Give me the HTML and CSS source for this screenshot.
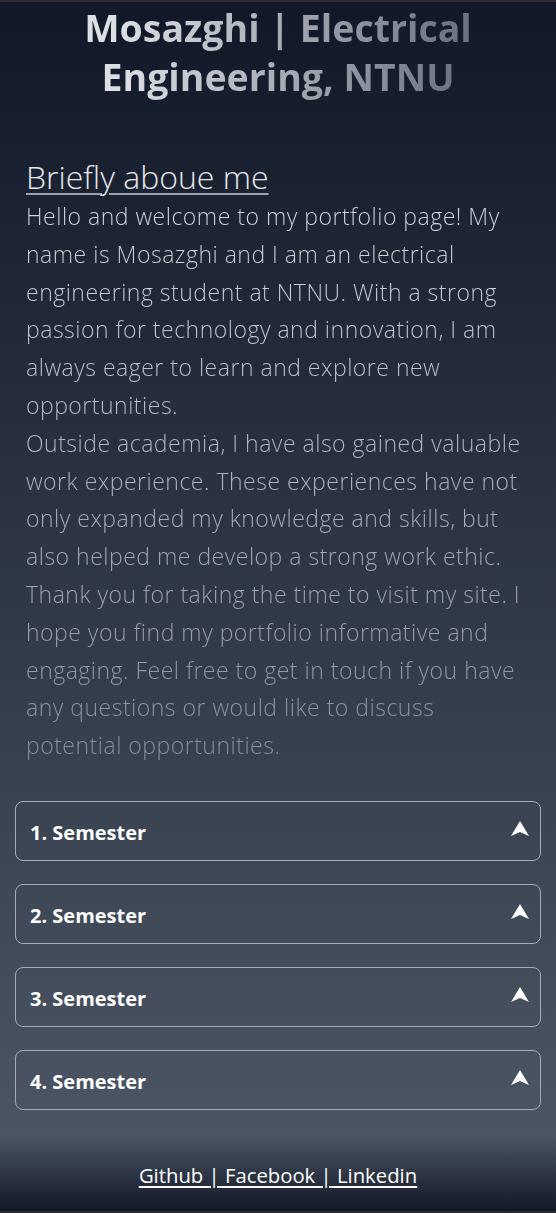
FILE: index.html
```html
<!DOCTYPE html>
<html lang="en">
<head>
<meta charset="utf-8">
<title>Mosazghi | Electrical Engineering, NTNU</title>
<link rel="stylesheet" href="styles.css">
</head>
<body>
<main class="page">
  <h1 class="title">Mosazghi | Electrical Engineering, NTNU</h1>
  <section class="about">
    <h2 class="about-heading">Briefly aboue me</h2>
    <p class="about-text">Hello and welcome to my portfolio page! My name is Mosazghi and I am an electrical engineering student at NTNU. With a strong passion for technology and innovation, I am always eager to learn and explore new opportunities.<br>Outside academia, I have also gained valuable work experience. These experiences have not only expanded my knowledge and skills, but also helped me develop a strong work ethic.<br>Thank you for taking the time to visit my site. I hope you find my portfolio informative and engaging. Feel free to get in touch if you have any questions or would like to discuss potential opportunities.</p>
  </section>
  <section class="semesters">
    <div class="semester"><span class="semester-title">1. Semester</span><svg class="chevron" viewBox="0 0 18 15"><path d="M9 0 L18 15 L9 11 L0 15 Z"/></svg></div>
    <div class="semester"><span class="semester-title">2. Semester</span><svg class="chevron" viewBox="0 0 18 15"><path d="M9 0 L18 15 L9 11 L0 15 Z"/></svg></div>
    <div class="semester"><span class="semester-title">3. Semester</span><svg class="chevron" viewBox="0 0 18 15"><path d="M9 0 L18 15 L9 11 L0 15 Z"/></svg></div>
    <div class="semester"><span class="semester-title">4. Semester</span><svg class="chevron" viewBox="0 0 18 15"><path d="M9 0 L18 15 L9 11 L0 15 Z"/></svg></div>
  </section>
</main>
<footer class="footer">
  <p class="links"><a href="#">Github </a>|<a href="#"> Facebook </a>|<a href="#"> Linkedin</a></p>
</footer>
</body>
</html>
```

FILE: styles.css
```css
html, body {
  margin: 0;
  padding: 0;
}
body {
  background: #111827;
  border-top: 2px solid #2b2b2c;
  border-bottom: 2px solid #2b2b2c;
  font-family: "Open Sans", "Noto Sans", sans-serif;
  color: #e5e7eb;
}
.page {
  background: linear-gradient(to bottom, #111827 0%, #4b5563 100%);
  padding: 1px 15px 0;
  height: 1133px;
  box-sizing: border-box;
}
.title {
  margin: 0;
  text-align: center;
  font-size: 37.5px;
  line-height: 49px;
  font-weight: 700;
  padding: 0 60px;
  background: linear-gradient(to right, #dcdfe4 20%, #6b7280 85%);
  -webkit-background-clip: text;
  background-clip: text;
  color: transparent;
}
.about {
  padding: 0 11px;
  margin-top: 55px;
}
.about-heading {
  margin: 0;
  font-size: 32px;
  font-weight: 300;
  line-height: 41px;
  color: #e5e7eb;
  text-decoration: underline;
  text-decoration-thickness: 2px;
  text-underline-offset: 4px;
  text-decoration-color: #9ca3af;
}
.about-text {
  margin: 1px 0 0;
  font-size: 23px;
  font-weight: 300;
  letter-spacing: 0.5px;
  line-height: 37.8px;
  background: linear-gradient(to bottom, #d6d9de 0%, #868d99 100%);
  -webkit-background-clip: text;
  background-clip: text;
  color: transparent;
}
.semesters {
  margin-top: 36px;
  display: flex;
  flex-direction: column;
  gap: 23px;
}
.semester {
  height: 60px;
  box-sizing: border-box;
  border: 1px solid #a6abb4;
  border-radius: 8px;
  display: flex;
  align-items: center;
  justify-content: space-between;
  padding: 0 11px 0 14px;
}
.semester-title {
  font-weight: 700;
  font-size: 20px;
  color: #ffffff;
  margin-top: 4px;
}
.chevron {
  width: 18px;
  height: 15px;
  fill: #ffffff;
  margin-bottom: 4px;
}
.footer {
  background: linear-gradient(to bottom, #4b5563 0%, #111827 100%);
  height: 76px;
  box-sizing: border-box;
  padding-top: 4px;
  display: flex;
  align-items: center;
  justify-content: center;
}
.links {
  margin: 0;
  font-size: 20.3px;
  color: #ffffff;
  text-decoration: underline;
  text-underline-offset: 3px;
}
.links a {
  color: #ffffff;
  text-decoration: underline;
}
```
